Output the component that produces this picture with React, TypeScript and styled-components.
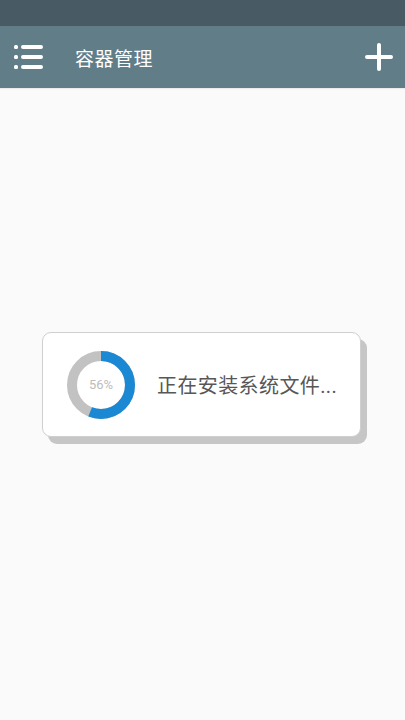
import React from 'react'
import styled, { createGlobalStyle } from 'styled-components'

const GlobalStyle = createGlobalStyle`
	html, body {
		margin: 0;
		padding: 0;
		background: #fafafa;
		font-family: Roboto, "Noto Sans CJK SC", "Noto Sans", sans-serif;
	}
`

const Screen = styled.div`
	width: 405px;
	height: 720px;
	display: flex;
	flex-direction: column;
	background: #fafafa;
`

const StatusBar = styled.div`
	height: 26px;
	background: #485b64;
`

const Toolbar = styled.div`
	height: 62px;
	background: #607d88;
	display: flex;
	align-items: center;
	padding: 0 12px 0 14px;
	box-sizing: border-box;
	box-shadow: 0 1px 1px rgba(0, 0, 0, 0.06);
`

const Title = styled.div`
	flex: 1;
	margin-left: 31px;
	color: #ffffff;
	font-size: 19px;
	letter-spacing: 0.5px;
`

const Content = styled.div`
	flex: 1;
	display: flex;
	justify-content: center;
	align-items: flex-start;
	padding-top: 244px;
`

const Card = styled.div`
	width: 319px;
	height: 105px;
	box-sizing: border-box;
	background: #ffffff;
	border: 1px solid #cfcfcf;
	border-radius: 9px;
	box-shadow: 6px 7px 0 #c6c6c6;
	display: flex;
	align-items: center;
	padding-left: 24px;
	margin-left: -2px;
`

const Message = styled.div`
	margin-left: 22px;
	color: #575757;
	font-size: 20px;
	letter-spacing: 0.4px;
`

const ProgressWrap = styled.div`
	position: relative;
	width: 68px;
	height: 68px;
`

const ProgressLabel = styled.div`
	position: absolute;
	inset: 0;
	display: flex;
	align-items: center;
	justify-content: center;
	color: #bdbdbd;
	font-size: 13px;
`

const MenuIcon = () => (
	<svg width="30" height="28" viewBox="0 0 30 28">
		{[4, 14, 24].map((y) => (
			<g key={y}>
				<rect x="0" y={y - 2} width="4" height="4" rx="1.5" fill="#fff" />
				<rect x="7" y={y - 2} width="22" height="4" rx="2" fill="#fff" />
			</g>
		))}
	</svg>
)

const PlusIcon = () => (
	<svg width="28" height="28" viewBox="0 0 28 28">
		<rect x="12" y="0" width="4" height="28" rx="2" fill="#fff" />
		<rect x="0" y="12" width="28" height="4" rx="2" fill="#fff" />
	</svg>
)

const Donut = ({ percent }: { percent: number }) => {
	const r = 29
	const c = 2 * Math.PI * r
	return (
		<ProgressWrap>
			<svg width="68" height="68" viewBox="0 0 68 68">
				<circle cx="34" cy="34" r={r} fill="none" stroke="#c2c2c2" strokeWidth="10" />
				<circle
					cx="34"
					cy="34"
					r={r}
					fill="none"
					stroke="#1a88d2"
					strokeWidth="10"
					strokeDasharray={`${(c * percent) / 100} ${c}`}
					transform="rotate(-90 34 34)"
				/>
			</svg>
			<ProgressLabel>{percent}%</ProgressLabel>
		</ProgressWrap>
	)
}

export default function App() {
	return (
		<Screen>
			<GlobalStyle />
			<StatusBar />
			<Toolbar>
				<MenuIcon />
				<Title>容器管理</Title>
				<PlusIcon />
			</Toolbar>
			<Content>
				<Card>
					<Donut percent={56} />
					<Message>正在安装系统文件...</Message>
				</Card>
			</Content>
		</Screen>
	)
}
